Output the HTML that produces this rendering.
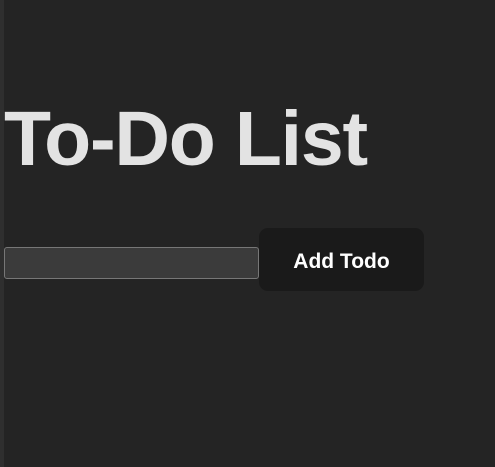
<!DOCTYPE html>
<html><head><style>
html,body{margin:0;padding:0;width:495px;height:467px;overflow:hidden;background:#242424;}
.strip{position:absolute;left:0;top:0;width:4px;height:467px;background:#2f2f2f;}
h1{position:absolute;left:4px;top:94px;margin:0;font-family:"Liberation Sans",sans-serif;font-weight:bold;font-size:77px;letter-spacing:-1.2px;color:#e3e3e3;line-height:90px;white-space:nowrap;}
.inp{position:absolute;left:4px;top:247px;width:253px;height:30px;background:#3b3b3b;border:1px solid #777;border-radius:3px;}
.btn{position:absolute;left:259px;top:228px;width:165px;height:63px;background:#1a1a1a;border-radius:9px;color:#fff;font-family:"Liberation Sans",sans-serif;font-weight:bold;font-size:21px;line-height:67px;text-align:center;}
</style></head><body>
<div class="strip"></div>
<h1>To-Do List</h1>
<div class="inp"></div>
<div class="btn">Add Todo</div>
</body></html>
